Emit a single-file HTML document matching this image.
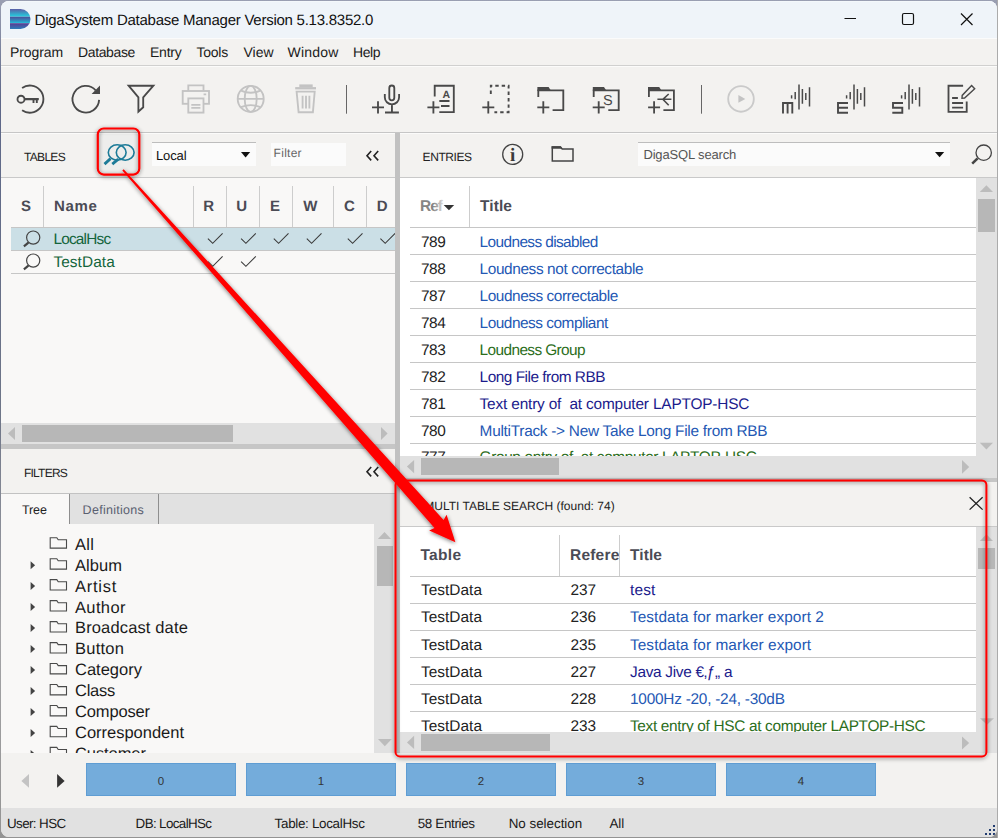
<!DOCTYPE html>
<html lang="en">
<head>
<meta charset="utf-8">
<title>DigaSystem Database Manager Version 5.13.8352.0</title>
<style>
*{box-sizing:border-box;margin:0;padding:0}
html,body{width:998px;height:838px;overflow:hidden}
body{position:relative;background:linear-gradient(180deg,#9a9fb2 0,#5d6788 12%,#6f7688 50%,#a5a5a8 75%,#939393 100%);font-family:"Liberation Sans","DejaVu Sans",sans-serif;color:#1a1a1a;text-rendering:geometricPrecision}
#win{position:absolute;left:0;top:0;width:998px;height:838px;clip-path:inset(1px 1px 1px 1px round 8px);background:#f3f2f0}
#win div,#win svg,#ov svg{position:absolute}
#ring{position:absolute;left:1px;top:1px;width:996px;height:836px;border-radius:8px;border-top:1px solid #f4f8fb;pointer-events:none}
#edge{position:absolute;left:997px;top:0;width:1px;height:838px;background:#ababab}
.t{white-space:pre;line-height:1}
.rl{height:1px;background:#c6c6c6}
.sb{background:#e1e1e1}
.th{background:#b7b7b7}
.btn{top:763px;width:150px;height:33px;background:#74acdb;border:1px solid #5f9dd3}
.clip{overflow:hidden}
</style>
</head>
<body>
<div id="win">
<!-- ===== title bar ===== -->
<div style="left:0;top:0;width:998px;height:38px;background:#eff4f9"></div>
<svg style="left:9px;top:8px" width="23" height="22" viewBox="9 8 23 22">
<defs>
<linearGradient id="g1" x1="0" y1="0" x2="0" y2="1"><stop offset="0" stop-color="#5b5ea6"/><stop offset=".75" stop-color="#2fb5d2"/><stop offset="1" stop-color="#25cfe0"/></linearGradient>
<linearGradient id="g2" x1="0" y1="0" x2="0" y2="1"><stop offset="0" stop-color="#4b4c98"/><stop offset=".7" stop-color="#2f96c4"/><stop offset="1" stop-color="#22c6dc"/></linearGradient>
<linearGradient id="g3" x1="0" y1="0" x2="0" y2="1"><stop offset="0" stop-color="#5a3a90"/><stop offset="1" stop-color="#2c7cba"/></linearGradient>
<clipPath id="dclip"><path d="M10 9H20.500A10 10 0 0 1 20.500 29H10Z"/></clipPath>
</defs>
<g clip-path="url(#dclip)"><rect x="10" y="9" width="21" height="7.700" fill="url(#g1)"/><rect x="10" y="16.700" width="21" height="6.500" fill="url(#g2)"/><rect x="10" y="23.200" width="21" height="5.800" fill="url(#g3)"/></g>
</svg>
<svg style="left:840px;top:8px" width="150" height="22" viewBox="840 8 150 22" fill="none" stroke="#111" stroke-width="1.200">
<path d="M844.500 18.500H856"/><rect x="902.500" y="13.500" width="11" height="11" rx="1.500"/><path d="M961 13.500L972.500 25M972.500 13.500L961 25"/>
</svg>
<!-- ===== menu bar + toolbar ===== -->
<div class="rl" style="left:0;top:38px;width:998px;background:#fbfbfb"></div>
<div class="rl" style="left:0;top:65px;width:998px;background:#d0d0cf"></div>
<div class="rl" style="left:0;top:66px;width:998px;background:#fbfbfa"></div>

<svg style="left:0;top:67px" width="998" height="65" viewBox="0 67 998 65" fill="none" stroke="#494949" stroke-width="1.85">
<!-- key / login -->
<path d="M22.100 87.900A13.600 13.600 0 1 1 22.100 110.300"/>
<circle cx="21" cy="99.2" r="3.5"/><path d="M24.600 99.200H38.800" stroke-width="2.200"/><path d="M33.500 99.200V102.900M36.800 99.200V102.900" stroke-width="1.900"/>
<!-- refresh -->
<path d="M99.1 99.9A13.3 13.3 0 1 1 95.7 90.3"/><path d="M91.6 94L100 85.6V94Z" fill="#494949" stroke="none"/>
<!-- filter -->
<path d="M128.6 85.7H153.4L143.2 97.4V107.3L138.4 111.6V97.4Z"/>
<!-- printer (disabled) -->
<g stroke="#c3c3c3"><path d="M188.3 91V85.4H203.5V91"/><rect x="182.7" y="91" width="26.3" height="12.8"/><rect x="188.3" y="98.4" width="15.2" height="14.2" fill="#f3f2f0"/><path d="M191.3 104.8H200.4M191.3 107.8H200.4M203.6 94.4H206.200"/></g>
<!-- globe (disabled) -->
<g stroke="#c3c3c3"><circle cx="250.7" cy="98.9" r="13"/><ellipse cx="250.7" cy="98.9" rx="6" ry="13"/><path d="M237.7 98.9H263.7M241 90.6Q250.7 94.8 260.400 90.6M241 107.2Q250.7 103 260.400 107.2"/></g>
<!-- trash (disabled) -->
<g stroke="#c3c3c3"><rect x="299.3" y="84.4" width="13.4" height="2.8" fill="#c3c3c3" stroke="none"/><rect x="295.2" y="87.1" width="20.8" height="2.3" fill="#c3c3c3" stroke="none"/><path d="M296.6 91.6H314.7L312.9 112.2H298.6Z"/><path d="M302.6 95.8V108.6M306 95.8V108.6M309.4 95.8V108.6"/></g>
<path d="M346.5 85V113.7M701.5 85V113.7" stroke="#666" stroke-width="1"/>
<!-- new recording -->
<path d="M372.0 107.4H384.0M378.0 101.2V113.6"/><rect x="389.3" y="85.5" width="5" height="14.8" rx="2.5"/><path d="M384.8 94V97.2A7.15 7.15 0 0 0 399.1 97.2V94M391.95 104.4V112.500M385 112.500H398.900"/>
<!-- new text -->
<path d="M427.4 107.4H439.4M433.4 101.2V113.6"/><path d="M434.7 96.6V85.7H453.8V112.1H439.3M439.3 101H449.5M441 106H449.5"/>
<text x="446.3" y="97.6" font-family="Liberation Sans,sans-serif" font-size="10.500" font-weight="700" fill="#494949" stroke="none" text-anchor="middle">A</text>
<!-- new empty -->
<path d="M482.3 107.4H494.3M488.3 101.2V113.6"/><path d="M490.8 94V85.700H508.600V112.200H494.400" stroke-dasharray="3.400 3" stroke-width="1.900"/>
<!-- new folder -->
<path d="M537.3 107.4H549.3M543.3 101.2V113.6"/><path d="M538.3 97V90.4H563.3V110.1H552.6"/><path d="M537.4 87H548.6L551.2 91H537.4Z" fill="#494949" stroke="none"/>
<!-- new smart folder -->
<path d="M592.7 107.4H604.7M598.7 101.2V113.6"/><path d="M593.7 97V90.4H618.7V110.1H608.3"/><path d="M592.8 87H604.0L606.6 91H592.8Z" fill="#494949" stroke="none"/>
<text x="607.8" y="105" font-family="Liberation Sans,sans-serif" font-size="14.500" fill="#494949" stroke="none" text-anchor="middle">S</text>
<!-- new link folder -->
<path d="M648.1 107.4H660.1M654.1 101.2V113.6"/><path d="M648.9 97V90.4H673.9V110.1H663.4"/><path d="M648.0 87H659.2L661.8 91H648.0Z" fill="#494949" stroke="none"/><path stroke-width="1.600" d="M657.400 99.300H671.400M668.700 94L662.900 99.300L668.700 105.200"/>
<!-- play (disabled) -->
<circle cx="741" cy="98.9" r="12.8" stroke="#cacaca"/><path d="M738.4 95.100V102.700L745.3 98.900Z" fill="#c3c3c3" stroke="none"/>
<!-- multitrack / easytrack / singletrack -->
<path stroke-width="1.500" d="M791.6 95.3V98.4M795.2 91.9V99.2M799.0 84.4V109.4M802.4 89V103.8M805.8 92.9V100M809.5 87.3V106.4"/><path stroke-width="1.900" d="M783.0 113.4V103H792.3V113.4M787.6 103V113.4"/><path stroke-width="1.500" d="M846.6 95.3V98.4M850.2 91.9V99.2M854.0 84.4V109.4M857.4 89V103.8M860.8 92.9V100M864.5 87.3V106.4"/><path stroke-width="1.900" d="M848.0 103H838.0V112.7H848.0M838.0 107.8H848.0"/><path stroke-width="1.500" d="M901.6 95.3V98.4M905.2 91.9V99.2M909.0 84.4V109.4M912.4 89V103.8M915.8 92.9V100M919.5 87.3V106.4"/><path stroke-width="1.900" d="M903.0 103H893.0V107.8H902.3V112.7H892.3"/>
<!-- edit -->
<path d="M963.1 85.7H948.5V111.9H966.7V101.6M952.1 98H957.9M952.1 103H963.1M952.1 107.600H963.1"/><path d="M971.6 85.600L974.700 88.800L964.600 98L962 98.300L962.200 95.400Z" stroke-width="1.400"/>
</svg>
<div class="rl" style="left:0;top:132px;width:998px;background:#c6c6c6"></div>
<div class="rl" style="left:0;top:133px;width:998px;background:#fbfbfa"></div>

<!-- ===== TABLES panel ===== -->
<div style="left:1px;top:134px;width:394px;height:43px;background:#f3f2f0"></div>
<div style="left:99px;top:134px;width:39px;height:39px;background:#ededec"></div>
<svg style="left:100px;top:140px" width="40" height="28" viewBox="100 140 40 28" fill="none" stroke="#1d7b98" stroke-width="1.600">
<ellipse cx="117.200" cy="152.500" rx="8.900" ry="7.700"/><ellipse cx="125.200" cy="152.500" rx="8.900" ry="7.700"/>
<path d="M110.500 158.600L104.500 164.100M118.300 159.200L112.300 164.200" stroke-width="2.800"/>
</svg>
<div style="left:152px;top:142px;width:104px;height:24px;background:#fbfbfb;border-top:1px solid #bdbdbd"></div>
<svg style="left:240px;top:150px" width="12" height="9" viewBox="240 150 12 9"><polygon points="241,152 250.200,152 245.600,157.400" fill="#111"/></svg>
<div style="left:271px;top:143px;width:75px;height:23px;background:#fbfbfb"></div>
<svg style="left:364px;top:148px" width="18" height="16" viewBox="364 148 18 16" fill="none" stroke="#222" stroke-width="1.600"><path d="M371.200 151L367 155.700L371.200 160.400M378.200 151L374 155.700L378.200 160.400"/></svg>
<div class="rl" style="left:1px;top:177px;width:394px;background:#c9c9c9"></div>
<div style="left:1px;top:178px;width:394px;height:245px;background:#f9f8f7"></div>
<div style="left:11px;top:228px;width:384px;height:22px;background:#cbdfe6"></div>
<div style="left:43px;top:186px;width:1px;height:41px;background:#cdcdcd"></div><div style="left:193px;top:186px;width:1px;height:41px;background:#cdcdcd"></div><div style="left:226px;top:186px;width:1px;height:41px;background:#cdcdcd"></div><div style="left:259px;top:186px;width:1px;height:41px;background:#cdcdcd"></div><div style="left:292px;top:186px;width:1px;height:41px;background:#cdcdcd"></div><div style="left:333px;top:186px;width:1px;height:41px;background:#cdcdcd"></div><div style="left:366px;top:186px;width:1px;height:41px;background:#cdcdcd"></div>
<div class="rl" style="left:11px;top:227px;width:384px"></div><div class="rl" style="left:11px;top:250px;width:384px"></div><div class="rl" style="left:11px;top:273px;width:384px"></div>
<svg style="left:20px;top:228px" width="376" height="46" viewBox="20 228 376 46" fill="none" stroke="#444" stroke-width="1.200">
<circle cx="33.200" cy="237.600" r="6.600"/><path d="M28.400 242.700L23.900 246.400" stroke-width="2.200"/>
<circle cx="33.200" cy="260.600" r="6.600"/><path d="M28.400 265.700L23.900 269.400" stroke-width="2.200"/>
<g stroke-width="1.100" stroke="#3c3c3c"><path d="M207.9 238.600L212.7 243.300L222.6 233.400"/><path d="M241.1 238.600L245.9 243.300L255.8 233.400"/><path d="M273.8 238.600L278.6 243.300L288.5 233.400"/><path d="M306.8 238.600L311.6 243.300L321.5 233.400"/><path d="M347.8 238.600L352.6 243.300L362.5 233.400"/><path d="M380.4 238.600L385.2 243.300L395.1 233.400"/><path d="M207.9 261.600L212.7 266.300L222.6 256.400"/><path d="M241.1 261.600L245.9 266.300L255.8 256.400"/></g>
</svg>
<!-- h scrollbar -->
<div class="sb" style="left:1px;top:423px;width:394px;height:21px"></div>
<div class="th" style="left:22px;top:425px;width:211px;height:17px"></div>
<svg style="left:2px;top:423px" width="393" height="21" viewBox="2 423 393 21"><polygon points="8,433.400 15,427 15,440" fill="#bcbcbc"/><polygon points="387.600,433.400 381,427 381,440" fill="#bcbcbc"/></svg>
<div style="left:1px;top:444px;width:394px;height:5px;background:#c6c6c6"></div>
<!-- ===== FILTERS panel ===== -->
<div style="left:1px;top:449px;width:394px;height:44px;background:#f3f2f0"></div>
<svg style="left:364px;top:464px" width="18" height="16" viewBox="364 464 18 16" fill="none" stroke="#222" stroke-width="1.600"><path d="M371.200 467L367 471.700L371.200 476.400M378.200 467L374 471.700L378.200 476.400"/></svg>
<div style="left:1px;top:493px;width:394px;height:31px;background:#e1e1e1;border-top:1px solid #c2c2c2"></div>
<div style="left:1px;top:494px;width:68px;height:30px;background:#f9f8f7"></div>
<div style="left:69px;top:494px;width:1px;height:30px;background:#8e8e8e"></div>
<div style="left:158px;top:494px;width:1px;height:30px;background:#8e8e8e"></div>
<div style="left:1px;top:524px;width:394px;height:229px;background:#f9f8f7"></div>
<div class="clip" style="left:2px;top:524px;width:372px;height:229px"><div style="left:-2px;top:-524px;width:400px;height:800px">
<svg style="left:0;top:524px" width="375" height="240" viewBox="0 524 375 240"><g fill="none" stroke="#4a4a4a" stroke-width="1.100"><path d="M50.2 548.1V537.7H56.8L58.2 539.8H66.5V548.1Z"/><path d="M50.2 569.1V558.7H56.8L58.2 560.8H66.5V569.1Z"/><path d="M50.2 590.0V579.6H56.8L58.2 581.7H66.5V590.0Z"/><path d="M50.2 611.0V600.6H56.8L58.2 602.7H66.5V611.0Z"/><path d="M50.2 632.0V621.6H56.8L58.2 623.7H66.5V632.0Z"/><path d="M50.2 653.0V642.6H56.8L58.2 644.6H66.5V653.0Z"/><path d="M50.2 673.9V663.5H56.8L58.2 665.6H66.5V673.9Z"/><path d="M50.2 694.9V684.5H56.8L58.2 686.6H66.5V694.9Z"/><path d="M50.2 715.9V705.5H56.8L58.2 707.6H66.5V715.9Z"/><path d="M50.2 736.8V726.4H56.8L58.2 728.5H66.5V736.8Z"/><path d="M50.2 757.8V747.4H56.8L58.2 749.5H66.5V757.8Z"/></g><g fill="#444"><polygon points="30.6,561.2 30.6,569.2 35.1,565.2"/><polygon points="30.6,582.1 30.6,590.1 35.1,586.1"/><polygon points="30.6,603.1 30.6,611.1 35.1,607.1"/><polygon points="30.6,624.1 30.6,632.1 35.1,628.1"/><polygon points="30.6,645.1 30.6,653.1 35.1,649.1"/><polygon points="30.6,666.0 30.6,674.0 35.1,670.0"/><polygon points="30.6,687.0 30.6,695.0 35.1,691.0"/><polygon points="30.6,708.0 30.6,716.0 35.1,712.0"/><polygon points="30.6,728.9 30.6,736.9 35.1,732.9"/><polygon points="30.6,749.9 30.6,757.9 35.1,753.9"/></g></svg>
<div class="t" style="left:75.0px;top:537.0px;font-size:16.5px;letter-spacing:0.285px;color:#1a1a1a">All</div>
<div class="t" style="left:75.0px;top:558.0px;font-size:16.5px;letter-spacing:0.084px;color:#1a1a1a">Album</div>
<div class="t" style="left:75.0px;top:579.0px;font-size:16.5px;letter-spacing:0.734px;color:#1a1a1a">Artist</div>
<div class="t" style="left:75.0px;top:600.0px;font-size:16.5px;letter-spacing:0.362px;color:#1a1a1a">Author</div>
<div class="t" style="left:75.0px;top:620.0px;font-size:16.5px;letter-spacing:0.143px;color:#1a1a1a">Broadcast date</div>
<div class="t" style="left:75.0px;top:641.0px;font-size:16.5px;letter-spacing:0.247px;color:#1a1a1a">Button</div>
<div class="t" style="left:75.0px;top:662.0px;font-size:16.5px;letter-spacing:-0.007px;color:#1a1a1a">Category</div>
<div class="t" style="left:75.0px;top:683.0px;font-size:16.5px;letter-spacing:-0.253px;color:#1a1a1a">Class</div>
<div class="t" style="left:75.0px;top:704.0px;font-size:16.5px;letter-spacing:-0.153px;color:#1a1a1a">Composer</div>
<div class="t" style="left:75.0px;top:725.0px;font-size:16.5px;letter-spacing:-0.012px;color:#1a1a1a">Correspondent</div>
<div class="t" style="left:75.0px;top:746.0px;font-size:16.5px;letter-spacing:-0.079px;color:#1a1a1a">Customer</div>
</div></div>
<!-- tree v scrollbar -->
<div class="sb" style="left:374px;top:524px;width:21px;height:229px"></div>
<div class="th" style="left:377px;top:546px;width:16px;height:40px"></div>
<svg style="left:375px;top:524px" width="20" height="229" viewBox="375 524 20 229"><polygon points="384.500,531.900 377.900,539.100 391.100,539.100" fill="#bcbcbc"/><polygon points="384.800,746.200 378,738.900 391.800,738.900" fill="#bcbcbc"/></svg>
<!-- vertical splitter -->
<div style="left:395px;top:133px;width:5px;height:620px;background:#c1c1c1"></div>

<!-- ===== ENTRIES panel ===== -->
<div style="left:400px;top:134px;width:597px;height:43px;background:#f3f2f0"></div>
<svg style="left:500px;top:142px" width="80" height="26" viewBox="500 142 80 26" fill="none" stroke="#444" stroke-width="1.300">
<circle cx="512.700" cy="154.400" r="10"/>
<text x="512.700" y="160.600" font-family="Liberation Serif,serif" font-size="19" font-weight="700" fill="#3a3a3a" stroke="none" text-anchor="middle">i</text>
<path d="M552.300 161.100V147.100H560.500L562.200 149H573V161.100Z" stroke-width="1.500"/><path d="M551.600 146.300H560.800L562.300 148.800H551.600Z" fill="#444" stroke="none"/>
</svg>
<div style="left:638px;top:142px;width:312px;height:24px;background:#fbfbfb;border-top:1px solid #bdbdbd"></div>
<svg style="left:933px;top:150px" width="14" height="9" viewBox="933 150 14 9"><polygon points="935,152 944.200,152 939.600,157.200" fill="#111"/></svg>
<svg style="left:968px;top:142px" width="28" height="26" viewBox="968 142 28 26" fill="none" stroke="#444" stroke-width="1.300"><circle cx="983.700" cy="152.700" r="7.700"/><path d="M977.600 158.400L972.200 163.600" stroke-width="2.600"/></svg>
<div class="rl" style="left:400px;top:177px;width:597px;background:#c9c9c9"></div>
<div style="left:400px;top:178px;width:576px;height:278px;background:#fff"></div>
<div style="left:469px;top:186px;width:1px;height:41px;background:#cdcdcd"></div>
<div class="t" style="left:420.0px;top:199.0px;font-size:15.5px;letter-spacing:-0.995px;font-weight:700;color:#858585">Ref</div>
<div style="left:433px;top:196px;width:12px;height:20px;background:linear-gradient(90deg,rgba(255,255,255,0),rgba(255,255,255,.85))"></div>
<svg style="left:442px;top:203px" width="14" height="9" viewBox="442 203 14 9"><polygon points="443.700,205 454.200,205 448.950,210.300" fill="#333"/></svg>
<div class="rl" style="left:410px;top:227px;width:566px"></div><div class="rl" style="left:410px;top:254px;width:566px"></div><div class="rl" style="left:410px;top:281px;width:566px"></div><div class="rl" style="left:410px;top:308px;width:566px"></div><div class="rl" style="left:410px;top:335px;width:566px"></div><div class="rl" style="left:410px;top:362px;width:566px"></div><div class="rl" style="left:410px;top:389px;width:566px"></div><div class="rl" style="left:410px;top:416px;width:566px"></div><div class="rl" style="left:410px;top:443px;width:566px"></div>
<div class="clip" style="left:400px;top:178px;width:576px;height:278px"><div style="left:-400px;top:-178px;width:998px;height:838px">
<div class="t" style="left:421.0px;top:235.0px;font-size:15.4px;letter-spacing:-0.496px;color:#222">789</div>
<div class="t" style="left:479.6px;top:235.0px;font-size:15.4px;letter-spacing:-0.598px;color:#2458b4">Loudness disabled</div>
<div class="t" style="left:421.0px;top:262.0px;font-size:15.4px;letter-spacing:-0.496px;color:#222">788</div>
<div class="t" style="left:479.6px;top:262.0px;font-size:15.4px;letter-spacing:-0.389px;color:#2458b4">Loudness not correctable</div>
<div class="t" style="left:421.0px;top:289.0px;font-size:15.4px;letter-spacing:-0.496px;color:#222">787</div>
<div class="t" style="left:479.6px;top:289.0px;font-size:15.4px;letter-spacing:-0.449px;color:#2458b4">Loudness correctable</div>
<div class="t" style="left:421.0px;top:316.0px;font-size:15.4px;letter-spacing:-0.496px;color:#222">784</div>
<div class="t" style="left:479.6px;top:316.0px;font-size:15.4px;letter-spacing:-0.484px;color:#2458b4">Loudness compliant</div>
<div class="t" style="left:421.0px;top:343.0px;font-size:15.4px;letter-spacing:-0.496px;color:#222">783</div>
<div class="t" style="left:479.6px;top:343.0px;font-size:15.4px;letter-spacing:-0.601px;color:#2c6e1c">Loudness Group</div>
<div class="t" style="left:421.0px;top:370.0px;font-size:15.4px;letter-spacing:-0.496px;color:#222">782</div>
<div class="t" style="left:479.6px;top:370.0px;font-size:15.4px;letter-spacing:-0.494px;color:#1b1b8c">Long File from RBB</div>
<div class="t" style="left:421.0px;top:397.0px;font-size:15.4px;letter-spacing:-0.496px;color:#222">781</div>
<div class="t" style="left:479.6px;top:397.0px;font-size:15.4px;letter-spacing:-0.170px;color:#1b1b8c">Text entry of  at computer LAPTOP-HSC</div>
<div class="t" style="left:421.0px;top:424.0px;font-size:15.4px;letter-spacing:-0.496px;color:#222">780</div>
<div class="t" style="left:479.6px;top:424.0px;font-size:15.4px;letter-spacing:-0.274px;color:#2458b4">MultiTrack -&gt; New Take Long File from RBB</div>
<div class="t" style="left:421.0px;top:450.0px;font-size:15.4px;letter-spacing:-0.496px;color:#222">777</div>
<div class="t" style="left:479.6px;top:450.0px;font-size:15.4px;letter-spacing:-0.359px;color:#2c6e1c">Group entry of  at computer LAPTOP-HSC</div>
</div></div>
<div class="sb" style="left:976px;top:178px;width:21px;height:278px"></div>
<div class="th" style="left:978px;top:199px;width:17px;height:33px"></div>
<svg style="left:976px;top:178px" width="21" height="278" viewBox="976 178 21 278"><polygon points="986.400,185.200 979.800,192 993,192" fill="#bcbcbc"/><polygon points="986.400,449.500 979.800,442.800 993,442.800" fill="#bcbcbc"/></svg>
<div class="sb" style="left:400px;top:456px;width:597px;height:22px"></div>
<div class="th" style="left:421px;top:458px;width:138px;height:17px"></div>
<svg style="left:400px;top:456px" width="597" height="21" viewBox="400 456 597 21"><polygon points="406.900,466.600 414.100,460 414.100,473.200" fill="#bcbcbc"/><polygon points="969.200,466.900 962,460 962,473.800" fill="#bcbcbc"/></svg>
<div style="left:400px;top:478px;width:597px;height:4px;background:#c6c6c6"></div>
<!-- ===== MULTI TABLE SEARCH panel ===== -->
<div style="left:400px;top:482px;width:597px;height:44px;background:#f3f2f0"></div>
<svg style="left:966px;top:495px" width="20" height="18" viewBox="966 495 20 18" fill="none" stroke="#222" stroke-width="1.300"><path d="M969.600 497.300L982.600 509.600M982.600 497.300L969.600 509.600"/></svg>
<div class="rl" style="left:400px;top:526px;width:597px;background:#c9c9c9"></div>
<div style="left:400px;top:527px;width:576px;height:205px;background:#fff"></div>
<div style="left:559px;top:535px;width:1px;height:41px;background:#cdcdcd"></div>
<div style="left:619px;top:535px;width:1px;height:41px;background:#cdcdcd"></div>
<div class="rl" style="left:410px;top:576px;width:566px"></div><div class="rl" style="left:410px;top:603px;width:566px"></div><div class="rl" style="left:410px;top:630px;width:566px"></div><div class="rl" style="left:410px;top:657px;width:566px"></div><div class="rl" style="left:410px;top:684px;width:566px"></div><div class="rl" style="left:410px;top:711px;width:566px"></div>
<div class="clip" style="left:400px;top:527px;width:219px;height:60px"><div style="left:-400px;top:-527px;width:998px;height:838px">
<div class="t" style="left:570.0px;top:548.0px;font-size:15.5px;letter-spacing:0.208px;font-weight:700;color:#4b4b55">Refere</div>
</div></div>
<div class="clip" style="left:400px;top:527px;width:576px;height:205px"><div style="left:-400px;top:-527px;width:998px;height:838px">
<div class="t" style="left:421.0px;top:583.0px;font-size:15.4px;letter-spacing:0.031px;color:#222">TestData</div>
<div class="t" style="left:570.6px;top:583.0px;font-size:15.4px;letter-spacing:-0.163px;color:#222">237</div>
<div class="t" style="left:630.0px;top:583.0px;font-size:15.4px;letter-spacing:0.172px;color:#1b1b8c">test</div>
<div class="t" style="left:421.0px;top:610.0px;font-size:15.4px;letter-spacing:0.031px;color:#222">TestData</div>
<div class="t" style="left:570.6px;top:610.0px;font-size:15.4px;letter-spacing:-0.163px;color:#222">236</div>
<div class="t" style="left:630.0px;top:610.0px;font-size:15.4px;letter-spacing:0.051px;color:#2458b4">Testdata for marker export 2</div>
<div class="t" style="left:421.0px;top:638.0px;font-size:15.4px;letter-spacing:0.031px;color:#222">TestData</div>
<div class="t" style="left:570.6px;top:638.0px;font-size:15.4px;letter-spacing:-0.163px;color:#222">235</div>
<div class="t" style="left:630.0px;top:638.0px;font-size:15.4px;letter-spacing:0.060px;color:#2458b4">Testdata for marker export</div>
<div class="t" style="left:421.0px;top:665.0px;font-size:15.4px;letter-spacing:0.031px;color:#222">TestData</div>
<div class="t" style="left:570.6px;top:665.0px;font-size:15.4px;letter-spacing:-0.163px;color:#222">227</div>
<div class="t" style="left:630.0px;top:665.0px;font-size:15.4px;letter-spacing:-0.296px;color:#1b1b8c">Java Jive €‚ƒ„ a</div>
<div class="t" style="left:421.0px;top:692.0px;font-size:15.4px;letter-spacing:0.031px;color:#222">TestData</div>
<div class="t" style="left:570.6px;top:692.0px;font-size:15.4px;letter-spacing:-0.163px;color:#222">228</div>
<div class="t" style="left:630.0px;top:692.0px;font-size:15.4px;letter-spacing:-0.241px;color:#2458b4">1000Hz -20, -24, -30dB</div>
<div class="t" style="left:421.0px;top:719.0px;font-size:15.4px;letter-spacing:0.031px;color:#222">TestData</div>
<div class="t" style="left:570.6px;top:719.0px;font-size:15.4px;letter-spacing:-0.163px;color:#222">233</div>
<div class="t" style="left:630.0px;top:719.0px;font-size:15.4px;letter-spacing:-0.330px;color:#2c6e1c">Text entry of HSC at computer LAPTOP-HSC</div>
</div></div>

<div class="sb" style="left:976px;top:527px;width:21px;height:226px"></div>
<div class="th" style="left:978px;top:548px;width:17px;height:21px"></div>
<svg style="left:976px;top:527px" width="21" height="205" viewBox="976 527 21 205"><polygon points="986.400,534.200 979.800,541 993,541" fill="#bcbcbc"/><polygon points="987,724.800 980,718.300 994,718.300" fill="#bcbcbc"/></svg>
<div class="sb" style="left:400px;top:732px;width:597px;height:21px"></div>
<div class="th" style="left:421px;top:734px;width:129px;height:17px"></div>
<svg style="left:400px;top:732px" width="597" height="21" viewBox="400 732 597 21"><polygon points="407,742.400 414.100,735.700 414.100,749.100" fill="#bcbcbc"/><polygon points="969.200,742.900 962,736.400 962,749.600" fill="#bcbcbc"/></svg>
<!-- ===== quick filter bar ===== -->
<div style="left:1px;top:753px;width:996px;height:55px;background:#f3f2f0"></div>
<svg style="left:18px;top:770px" width="50" height="22" viewBox="18 770 50 22"><polygon points="21.400,780.900 29,774.100 29,787.800" fill="#c3c3c3"/><polygon points="57.100,774.100 57.100,787.800 64.600,780.900" fill="#333"/></svg>
<div class="btn" style="left:86px"></div><div class="btn" style="left:246px"></div><div class="btn" style="left:406px"></div><div class="btn" style="left:566px"></div><div class="btn" style="left:726px"></div>
<!-- ===== status bar ===== -->
<div style="left:1px;top:808px;width:996px;height:29px;background:#e1e1e1"></div>
<svg style="left:984px;top:824px" width="13" height="13" viewBox="984 824 13 13" fill="#223c70"><rect x="993" y="825" width="2" height="2"/><rect x="989" y="829" width="2" height="2"/><rect x="993" y="829" width="2" height="2"/><rect x="985" y="833" width="2" height="2"/><rect x="989" y="833" width="2" height="2"/><rect x="993" y="833" width="2" height="2"/></svg>
<!-- ===== all remaining text ===== -->
<div class="t" style="left:34.6px;top:13.0px;font-size:15px;letter-spacing:-0.249px;color:#111">DigaSystem Database Manager Version 5.13.8352.0</div>
<div class="t" style="left:10.0px;top:45.0px;font-size:14px;letter-spacing:-0.098px;color:#1a1a1a">Program</div>
<div class="t" style="left:78.0px;top:45.0px;font-size:14px;letter-spacing:-0.367px;color:#1a1a1a">Database</div>
<div class="t" style="left:150.0px;top:45.0px;font-size:14px;letter-spacing:-0.237px;color:#1a1a1a">Entry</div>
<div class="t" style="left:196.5px;top:45.0px;font-size:14px;letter-spacing:-0.237px;color:#1a1a1a">Tools</div>
<div class="t" style="left:243.5px;top:45.0px;font-size:14px;letter-spacing:-0.023px;color:#1a1a1a">View</div>
<div class="t" style="left:287.5px;top:45.0px;font-size:14px;letter-spacing:0.201px;color:#1a1a1a">Window</div>
<div class="t" style="left:353.0px;top:45.0px;font-size:14px;letter-spacing:-0.449px;color:#1a1a1a">Help</div>
<div class="t" style="left:24.0px;top:151.0px;font-size:12px;letter-spacing:-0.690px;color:#222">TABLES</div>
<div class="t" style="left:24.0px;top:467.0px;font-size:12px;letter-spacing:-0.779px;color:#222">FILTERS</div>
<div class="t" style="left:422.6px;top:151.0px;font-size:12px;letter-spacing:-0.431px;color:#222">ENTRIES</div>
<div class="t" style="left:424.2px;top:500.0px;font-size:12px;letter-spacing:0.014px;color:#222">MULTI TABLE SEARCH (found: 74)</div>
<div class="t" style="left:156.0px;top:149.0px;font-size:13px;letter-spacing:-0.116px;color:#111">Local</div>
<div class="t" style="left:273.6px;top:147.0px;font-size:12px;letter-spacing:0.271px;color:#666">Filter</div>
<div class="t" style="left:643.4px;top:148.0px;font-size:13px;letter-spacing:-0.150px;color:#555">DigaSQL search</div>
<div class="t" style="left:21.0px;top:199.0px;font-size:15px;letter-spacing:-0.616px;font-weight:700;color:#4b4b55">S</div>
<div class="t" style="left:54.0px;top:199.0px;font-size:15px;letter-spacing:0.660px;font-weight:700;color:#4b4b55">Name</div>
<div class="t" style="left:203.3px;top:199.0px;font-size:15px;letter-spacing:0.656px;font-weight:700;color:#4b4b55">R</div>
<div class="t" style="left:236.3px;top:199.0px;font-size:15px;letter-spacing:0.156px;font-weight:700;color:#4b4b55">U</div>
<div class="t" style="left:270.0px;top:199.0px;font-size:15px;letter-spacing:-0.016px;font-weight:700;color:#4b4b55">E</div>
<div class="t" style="left:303.2px;top:199.0px;font-size:15px;letter-spacing:1.828px;font-weight:700;color:#4b4b55">W</div>
<div class="t" style="left:344.0px;top:199.0px;font-size:15px;letter-spacing:0.056px;font-weight:700;color:#4b4b55">C</div>
<div class="t" style="left:376.7px;top:199.0px;font-size:15px;letter-spacing:0.256px;font-weight:700;color:#4b4b55">D</div>
<div class="t" style="left:53.4px;top:232.0px;font-size:15.4px;letter-spacing:-0.789px;color:#14653c">LocalHsc</div>
<div class="t" style="left:53.4px;top:255.0px;font-size:15.4px;letter-spacing:0.094px;color:#14653c">TestData</div>
<div class="t" style="left:22.0px;top:504.0px;font-size:12.5px;letter-spacing:-0.112px;color:#222">Tree</div>
<div class="t" style="left:82.6px;top:504.0px;font-size:12.5px;letter-spacing:0.284px;color:#5a6070">Definitions</div>
<div class="t" style="left:480.0px;top:199.0px;font-size:15.5px;letter-spacing:0.081px;font-weight:700;color:#4b4b55">Title</div>
<div class="t" style="left:420.4px;top:548.0px;font-size:15.5px;letter-spacing:0.331px;font-weight:700;color:#4b4b55">Table</div>
<div class="t" style="left:630.0px;top:548.0px;font-size:15.5px;letter-spacing:0.081px;font-weight:700;color:#4b4b55">Title</div>
<div class="t" style="left:7.0px;top:817.0px;font-size:13.4px;letter-spacing:-0.600px;color:#1a1a1a">User: HSC</div>
<div class="t" style="left:135.6px;top:817.0px;font-size:13.4px;letter-spacing:-0.630px;color:#1a1a1a">DB: LocalHSc</div>
<div class="t" style="left:274.6px;top:817.0px;font-size:13.4px;letter-spacing:-0.302px;color:#1a1a1a">Table: LocalHsc</div>
<div class="t" style="left:417.7px;top:817.0px;font-size:13.4px;letter-spacing:-0.330px;color:#1a1a1a">58 Entries</div>
<div class="t" style="left:508.7px;top:817.0px;font-size:13.4px;letter-spacing:-0.017px;color:#1a1a1a">No selection</div>
<div class="t" style="left:609.4px;top:817.0px;font-size:13.4px;letter-spacing:0.036px;color:#1a1a1a">All</div>
<div class="t" style="left:157.7px;top:777.0px;font-size:11.5px;color:#333">0</div>
<div class="t" style="left:317.7px;top:777.0px;font-size:11.5px;color:#333">1</div>
<div class="t" style="left:477.7px;top:777.0px;font-size:11.5px;color:#333">2</div>
<div class="t" style="left:637.7px;top:777.0px;font-size:11.5px;color:#333">3</div>
<div class="t" style="left:797.7px;top:777.0px;font-size:11.5px;color:#333">4</div>
</div>
<div id="ring"></div><div id="edge"></div>
<!-- ===== annotation overlay (red boxes + arrow) ===== -->
<div id="ov" style="position:absolute;left:0;top:0;width:998px;height:838px">
<svg style="left:0;top:0" width="998" height="838" viewBox="0 0 998 838">
<defs><filter id="sh" x="-5%" y="-5%" width="110%" height="110%"><feGaussianBlur in="SourceAlpha" stdDeviation="2.200"/><feOffset dx="0" dy="1.200"/><feComponentTransfer><feFuncA type="linear" slope=".55"/></feComponentTransfer><feMerge><feMergeNode/><feMergeNode in="SourceGraphic"/></feMerge></filter></defs>
<g filter="url(#sh)">
<rect x="97.800" y="128.500" width="41.500" height="46.100" rx="6" fill="none" stroke="#ff0000" stroke-width="2.200"/>
<rect x="395.500" y="480.500" width="590.900" height="275.900" rx="4.500" fill="none" stroke="#ff0000" stroke-width="2"/>
<polygon points="123.7,169.2 443.6,519.9 446.6,514.8 455.4,542.2 429.2,530.4 434.5,528.0 122.3,170.4" fill="#ff0000"/>
</g>
</svg>
</div>
</body>
</html>
